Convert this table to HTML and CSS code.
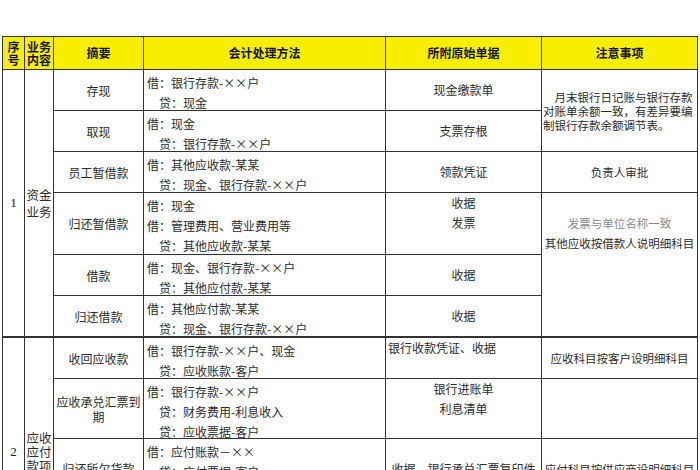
FILE: index.html
```html
<!DOCTYPE html>
<html lang="zh-CN">
<head>
<meta charset="utf-8">
<title>资金业务会计处理</title>
<link rel="stylesheet" href="styles.css">
</head>
<body>
<div class="sheet">
  <div class="hd two">序<br>号</div>
  <div class="hd two">业务<br>内容</div>
  <div class="hd">摘要</div>
  <div class="hd">会计处理方法</div>
  <div class="hd">所附原始单据</div>
  <div class="hd">注意事项</div>

  <div class="no span6">1</div>
  <div class="biz span6">资金<br>业务</div>
  <div class="sum">存现</div>
  <div class="acc"><p>借：银行存款-××户</p><p class="cr">贷：现金</p></div>
  <div class="doc">现金缴款单</div>
  <div class="note para span2"><p>月末银行日记账与银行存款对账单余额一致，有差异要编制银行存款余额调节表。</p></div>

  <div class="sum">取现</div>
  <div class="acc"><p>借：现金</p><p class="cr">贷：银行存款-××户</p></div>
  <div class="doc">支票存根</div>

  <div class="sum">员工暂借款</div>
  <div class="acc"><p>借：其他应收款-某某</p><p class="cr">贷：现金、银行存款-××户</p></div>
  <div class="doc">领款凭证</div>
  <div class="note">负责人审批</div>

  <div class="sum">归还暂借款</div>
  <div class="acc"><p>借：现金</p><p>借：管理费用、营业费用等</p><p class="cr">贷：其他应收款-某某</p></div>
  <div class="doc top"><p>收据</p><p>发票</p></div>
  <div class="note top span3"><p class="muted">发票与单位名称一致</p><p>其他应收按借款人说明细科目</p></div>

  <div class="sum">借款</div>
  <div class="acc"><p>借：现金、银行存款-××户</p><p class="cr">贷：其他应付款-某某</p></div>
  <div class="doc">收据</div>

  <div class="sum">归还借款</div>
  <div class="acc"><p>借：其他应付款-某某</p><p class="cr">贷：现金、银行存款-××户</p></div>
  <div class="doc">收据</div>

  <div class="no span4 sec">2</div>
  <div class="biz tight span4 sec">应收<br>应付<br>款项</div>
  <div class="sum sec">收回应收款</div>
  <div class="acc sec"><p>借：银行存款-××户、现金</p><p class="cr">贷：应收账款-客户</p></div>
  <div class="doc top left sec"><p>银行收款凭证、收据</p></div>
  <div class="note sec">应收科目按客户设明细科目</div>

  <div class="sum">应收承兑汇票到期</div>
  <div class="acc"><p>借：银行存款-××户</p><p class="cr">贷：财务费用-利息收入</p><p class="cr">贷：应收票据-客户</p></div>
  <div class="doc top"><p>银行进账单</p><p>利息清单</p></div>
  <div class="note"></div>

  <div class="sum">归还所欠货款</div>
  <div class="acc"><p>借：应付账款－××</p><p class="cr">贷：应付票据-客户</p></div>
  <div class="doc">收据、银行承兑汇票复印件</div>
  <div class="note">应付科目按供应商设明细科目</div>

  <div class="sum">应付票据到期</div>
  <div class="acc"><p>借：应付票据-客户</p><p class="cr">贷：银行存款-××户</p></div>
  <div class="doc">银行付款通知</div>
  <div class="note"></div>
</div>
</body>
</html>
```

FILE: styles.css
```css
html, body {
  margin: 0;
  padding: 0;
  overflow: hidden;
  background: #fff;
}

.sheet {
  display: grid;
  grid-template-columns: 21px 28px 89px 241px 155px 155px;
  grid-template-rows: 32px 40px 40px 40px 61px 40px 40px 41px 59px 59px 66px;
  gap: 1px;
  padding: 1px;
  width: max-content;
  margin: 36px 0 0 2px;
  background: #333;
}

.sheet > div {
  box-sizing: border-box;
  background: #fff;
  color: #2c2c2c;
  font-family: "Noto Sans CJK SC", "Noto Sans", sans-serif;
  font-size: 12px;
  line-height: 20px;
}

.sheet p {
  margin: 0;
}

.span2 { grid-row: span 2; }
.span3 { grid-row: span 3; }
.span4 { grid-row: span 4; }
.span6 { grid-row: span 6; }

.sec {
  border-top: 1px solid #333;
}

.sheet > .hd {
  background: #f8ef00;
  color: #111;
  font-weight: 700;
  display: flex;
  align-items: center;
  justify-content: center;
  text-align: center;
}

.sheet > .hd.two {
  line-height: 13px;
}

.sheet > .no {
  display: flex;
  align-items: center;
  justify-content: center;
  font-family: "Liberation Serif", serif;
  font-size: 13px;
  color: #222;
}

.sheet > .biz {
  display: flex;
  align-items: center;
  justify-content: center;
  text-align: center;
  font-size: 12.5px;
  line-height: 17px;
}

.sheet > .biz.tight {
  line-height: 14px;
}

.sheet > .sum {
  display: flex;
  align-items: center;
  justify-content: center;
  text-align: center;
  line-height: 15px;
  padding: 0 1px;
}

.sheet > .acc {
  padding: 3px 0 0 3px;
  white-space: nowrap;
}

.acc .cr {
  padding-left: 12px;
}

.sheet > .doc,
.sheet > .note {
  display: flex;
  flex-direction: column;
  align-items: center;
  justify-content: center;
  text-align: center;
}

.sheet > .note {
  font-size: 11.5px;
}

.sheet > .doc.top {
  justify-content: flex-start;
}

.sheet > .doc.left {
  align-items: flex-start;
  padding-left: 2px;
}

.sheet > .note.top {
  justify-content: flex-start;
  padding-top: 20px;
}

.sheet > .note.para {
  align-items: stretch;
  text-align: left;
  line-height: 14px;
  padding-left: 1px;
}

.note.para p {
  text-indent: 1em;
}

.muted {
  color: #8a8a8a;
}
```
